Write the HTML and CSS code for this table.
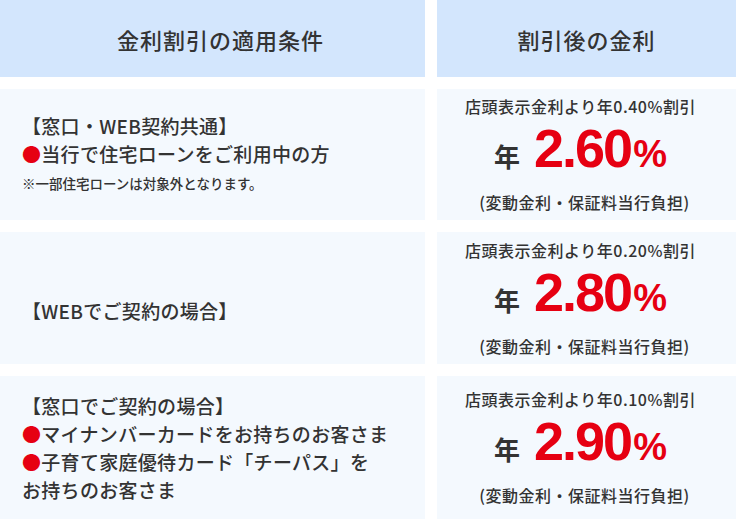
FILE: index.html
```html
<!DOCTYPE html>
<html lang="ja">
<head>
<meta charset="utf-8">
<link rel="stylesheet" href="styles.css">
</head>
<body>
<div class="table">
  <div class="head head-left">金利割引の適用条件</div>
  <div class="head">割引後の金利</div>

  <div class="cond">
    <p>【窓口・WEB契約共通】</p>
    <p><span class="dot">●</span>当行で住宅ローンをご利用中の方</p>
    <p class="note">※一部住宅ローンは対象外となります。</p>
  </div>
  <div class="rate">
    <p class="from">店頭表示金利より年0.40%割引</p>
    <p class="big"><span class="nen">年</span><span class="num">2.60</span><span class="pct">%</span></p>
    <p class="sub">(変動金利・保証料当行負担)</p>
  </div>

  <div class="cond cond-low">
    <p>【WEBでご契約の場合】</p>
  </div>
  <div class="rate">
    <p class="from">店頭表示金利より年0.20%割引</p>
    <p class="big"><span class="nen">年</span><span class="num">2.80</span><span class="pct">%</span></p>
    <p class="sub">(変動金利・保証料当行負担)</p>
  </div>

  <div class="cond">
    <p>【窓口でご契約の場合】</p>
    <p><span class="dot">●</span>マイナンバーカードをお持ちのお客さま</p>
    <p><span class="dot">●</span>子育て家庭優待カード「チーパス」を</p>
    <p>お持ちのお客さま</p>
  </div>
  <div class="rate">
    <p class="from">店頭表示金利より年0.10%割引</p>
    <p class="big"><span class="nen">年</span><span class="num">2.90</span><span class="pct">%</span></p>
    <p class="sub">(変動金利・保証料当行負担)</p>
  </div>
</div>
</body>
</html>
```

FILE: styles.css
```css
html, body {
  margin: 0;
  padding: 0;
  background: #ffffff;
}
body {
  font-family: "Noto Sans CJK JP", "Noto Sans", sans-serif;
  color: #333333;
}
p {
  margin: 0;
}
.table {
  display: grid;
  grid-template-columns: 425px 299px;
  grid-template-rows: 77px 131px 132px 143px;
  column-gap: 12px;
  row-gap: 12px;
}
.head {
  background: #d3e6fd;
  display: flex;
  align-items: center;
  justify-content: center;
  font-size: 22px;
  letter-spacing: 1px;
  font-weight: 500;
}
.head-left {
  padding-left: 16px;
}
.cond {
  background: #f4f9fe;
  display: flex;
  flex-direction: column;
  justify-content: center;
  padding-left: 22px;
  font-size: 19px;
  line-height: 28px;
  letter-spacing: 0.3px;
  font-weight: 500;
}
.cond-low {
  padding-top: 26px;
}
.dot {
  color: #e60012;
}
.note {
  font-size: 13.5px;
  line-height: 30px;
  letter-spacing: 0;
}
.rate {
  background: #f4f9fe;
  display: flex;
  flex-direction: column;
  align-items: center;
  justify-content: center;
  font-weight: 500;
  padding-right: 12px;
}
.from {
  font-size: 16px;
  line-height: 24px;
  letter-spacing: 0.5px;
}
.big {
  display: flex;
  align-items: baseline;
  line-height: 56px;
  margin-top: 2px;
}
.nen {
  font-size: 26px;
  font-weight: 700;
  margin-right: 14px;
}
.num {
  font-family: "Liberation Sans", Arial, sans-serif;
  font-weight: 700;
  font-size: 54px;
  color: #e60012;
  letter-spacing: -2px;
}
.pct {
  font-family: "Liberation Sans", Arial, sans-serif;
  font-weight: 700;
  font-size: 38px;
  color: #e60012;
  margin-left: 2px;
}
.sub {
  font-size: 16px;
  line-height: 26px;
  letter-spacing: 0.5px;
  margin-top: 5px;
  padding-left: 8px;
}
```
